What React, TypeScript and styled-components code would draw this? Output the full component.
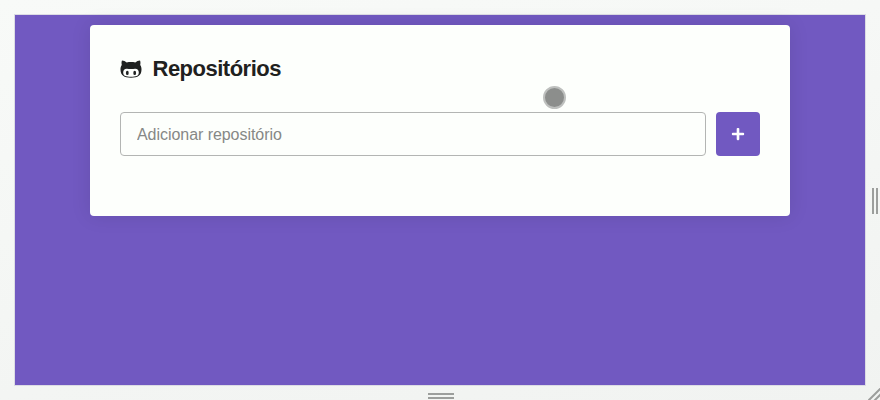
import React from 'react';
import styled, { createGlobalStyle } from 'styled-components';
import { FaPlus } from 'react-icons/fa';

const GlobalStyle = createGlobalStyle`
  * { margin: 0; padding: 0; box-sizing: border-box; }
  body { background: #f5f7f5; }
  body, input, button { font-family: 'Liberation Sans', Arial, sans-serif; }
`;

const Stage = styled.div`
  position: relative;
  width: 880px;
  height: 400px;
  padding: 14px;
  overflow: hidden;
  background: linear-gradient(170deg, #f8faf8, #f1f3f1);
`;

const Viewport = styled.main`
  width: 852px;
  height: 372px;
  padding: 10px 75px;
  border: 1px solid #dcdce4;
  background: #7159c1;
`;

const Card = styled.section`
  height: 191px;
  padding: 30px;
  border-radius: 4px;
  background: #fdfffc;
  box-shadow: 0 0 20px rgba(0, 0, 0, 0.1);
`;

const Title = styled.h1`
  display: flex;
  align-items: center;
  height: 27px;
  font-size: 22px;
  line-height: 27px;
  letter-spacing: -0.5px;
  color: #1f2120;
`;

const CatIcon = styled.svg`
  margin-right: 10.5px;
`;

const Form = styled.form`
  display: flex;
  gap: 10px;
  margin-top: 30px;
`;

const RepoInput = styled.input`
  flex: 1;
  height: 44px;
  padding: 2px 16px 0;
  border: 1px solid #b3b5b3;
  border-radius: 4px;
  background: transparent;
  font-size: 16px;
  letter-spacing: -0.05px;
  outline: 0;

  &::placeholder {
    color: #868886;
    opacity: 1;
  }
`;

const AddButton = styled.button`
  display: flex;
  align-items: center;
  justify-content: center;
  width: 44px;
  height: 44px;
  border: 0;
  border-radius: 4px;
  background: #7159c1;
`;

const TouchCursor = styled.div`
  position: absolute;
  left: 543px;
  top: 86px;
  width: 23px;
  height: 23px;
  border: 2px solid #bec0be;
  border-radius: 50%;
  background: #8c8e8c;
`;

const Handle = styled.div<{ $side: 'right' | 'bottom' }>`
  position: absolute;
  ${({ $side }) =>
    $side === 'right'
      ? 'left: 872px; top: 188px; width: 6px; height: 26px; border-width: 0 2px;'
      : 'left: 428px; top: 393px; width: 26px; height: 6px; border-width: 2px 0;'}
  border-style: solid;
  border-color: #9c9e9c;
`;

const Corner = styled.svg`
  position: absolute;
  right: 0;
  bottom: 0;
`;

export default function App() {
  return (
    <>
      <GlobalStyle />
      <Stage>
        <Viewport>
          <Card>
            <Title>
              <CatIcon width="22" height="21" viewBox="0 0 22 21">
                <path
                  fill="#1f2120"
                  d="M2 2.6c1.7.1 3.3.9 4.7 1.9 2.7-.6 5.9-.6 8.6 0 1.4-1 3-1.8 4.7-1.9.6 1.5.6 3 .2 4.4 1 1.3 1.4 2.8 1.3 4.8-.2 5.7-3.5 7.9-10.5 7.9S.7 17.5.5 11.8C.4 9.800.8 8.300 1.800 7 1.400 5.600 1.400 4.100 2 2.600Z"
                />
                <path
                  fill="#fdfffc"
                  d="M6.800 10.800c1.400 0 2.800.3 4.200.3s2.800-.3 4.200-.3c2.300 0 3.600 1.600 3.600 3.700 0 3.500-3 4.300-7.800 4.300s-7.800-.8-7.800-4.300c0-2.100 1.300-3.700 3.600-3.700Z"
                />
                <ellipse cx="7.300" cy="14.900" rx="1.400" ry="2.200" fill="#1f2120" />
                <ellipse cx="14.700" cy="14.900" rx="1.400" ry="2.200" fill="#1f2120" />
              </CatIcon>
              Repositórios
            </Title>
            <Form onSubmit={(event) => event.preventDefault()}>
              <RepoInput type="text" placeholder="Adicionar repositório" />
              <AddButton type="submit" aria-label="Adicionar">
                <FaPlus size={14} color="#fff" />
              </AddButton>
            </Form>
          </Card>
        </Viewport>
        <TouchCursor />
        <Handle $side="right" />
        <Handle $side="bottom" />
        <Corner width="12" height="12" viewBox="0 0 12 12" stroke="#9c9e9c" strokeWidth="2">
          <path d="M0 13 13 0M6 13 13 6" />
        </Corner>
      </Stage>
    </>
  );
}
